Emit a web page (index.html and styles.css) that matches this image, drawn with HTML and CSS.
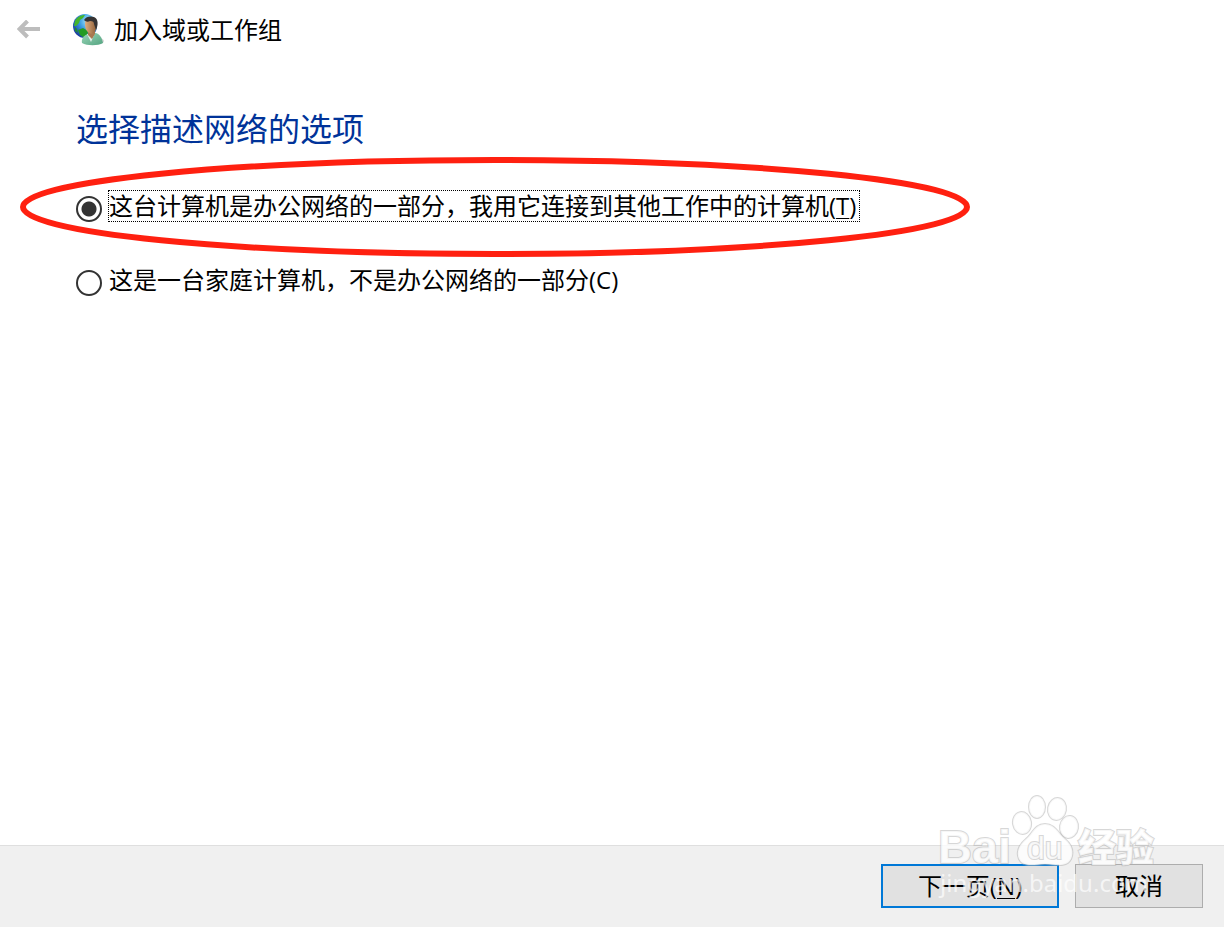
FILE: index.html
```
<!DOCTYPE html>
<html lang="zh-CN">
<head>
    <meta charset="UTF-8">
    <title>加入域或工作组</title>
    <link rel="stylesheet" href="styles.css">
</head>
<body>
    <!-- Title bar -->
    <header class="titlebar">
        <button class="back" type="button" aria-label="返回" disabled>
            <svg width="24" height="20" viewBox="0 0 24 20" fill="none" stroke="#bdbdbd" stroke-width="4">
                <path d="M3 9H23M10.500 1L2.500 9L10.500 17"/>
            </svg>
        </button>
        <svg class="app-icon" width="34" height="34" viewBox="0 0 34 34">
            <defs>
                <radialGradient id="globe" cx="0.65" cy="0.3" r="0.8">
                    <stop offset="0" stop-color="#b5efff"/>
                    <stop offset="0.45" stop-color="#3c9fe4"/>
                    <stop offset="1" stop-color="#152c93"/>
                </radialGradient>
                <linearGradient id="skin" x1="0" x2="1">
                    <stop offset="0" stop-color="#dfae80"/>
                    <stop offset="1" stop-color="#8f5f38"/>
                </linearGradient>
                <linearGradient id="shirt" x1="0" x2="1" y1="0" y2="1">
                    <stop offset="0" stop-color="#9bd6b8"/>
                    <stop offset="1" stop-color="#54a481"/>
                </linearGradient>
            </defs>
            <ellipse cx="26" cy="28" rx="5" ry="3" fill="#d5d5d5"/>
            <circle cx="12" cy="13" r="12" fill="url(#globe)"/>
            <path d="M2 8C4 4 8 2 12 2L10 5L7 7L6 10L3 13L1 13Z" fill="#45b52c"/>
            <path d="M5 17L10 15L15 18L14 24L10 24L7 22Z" fill="#249b22"/>
            <path d="M2 14L4 16L5 20L2 18Z" fill="#1f8a35"/>
            <path d="M9 30C8 26 11 22 15 21L23 20C28 22 29 26 30 30C25 33 14 33 9 30Z" fill="url(#shirt)"/>
            <path d="M14 21L18 29L22 20Z" fill="#e3eeea"/>
            <path d="M15 18H22V21L19 26L15 22Z" fill="#a87850"/>
            <path d="M12 11C12 6 16 4 19 5C24 6 24 12 23 16C22 20 19 22 16 20C13 18 12 15 12 11Z" fill="url(#skin)"/>
            <path d="M11 7C13 3 18 3 21 4C26 6 25 13 23 17L21 11C21 9 20 8 17 8C15 9 13 9 11 7Z" fill="#353333"/>
        </svg>
        <span class="title">加入域或工作组</span>
    </header>

    <!-- Page content -->
    <main class="content">
        <h1>选择描述网络的选项</h1>
        <form class="options" id="network">
            <div class="option">
                <input type="radio" name="network" id="office" checked>
                <label class="focused" for="office">这台计算机是办公网络的一部分，我用它连接到其他工作中的计算机(<u>T</u>)</label>
                <svg class="circle" viewBox="0 0 950 100" fill="none" stroke="#ff2010" stroke-width="6">
                    <ellipse cx="475" cy="50" rx="472" ry="47"/>
                </svg>
            </div>
            <div class="option">
                <input type="radio" name="network" id="home">
                <label for="home">这是一台家庭计算机，不是办公网络的一部分(C)</label>
            </div>
        </form>
    </main>

    <!-- Buttons -->
    <footer class="footer">
        <button class="btn next" type="submit" form="network">下一页(<u>N</u>)</button>
        <button class="btn" type="button">取消</button>
        <svg class="watermark" viewBox="0 0 240 120">
            <g class="mark">
                <ellipse cx="107" cy="22" rx="8" ry="11"/>
                <ellipse cx="127" cy="24" rx="9" ry="11" transform="rotate(10 127 24)"/>
                <ellipse cx="92" cy="38" rx="9" ry="11" transform="rotate(-10 92 38)"/>
                <ellipse cx="139" cy="42" rx="9" ry="11" transform="rotate(8 139 42)"/>
                <path d="M115 39C125 39 128 48 135 54C142 60 144 67 141 74C137 82 128 80 115 79C102 80 93 82 89 74C86 67 89 60 96 54C103 48 105 39 115 39Z"/>
                <text class="brand" x="8" y="78">Bai</text>
                <text class="du" x="97" y="74">du</text>
                <text class="cn" x="148" y="76">经验</text>
            </g>
            <text class="site" x="10" y="107">jingyan.baidu.com</text>
        </svg>
    </footer>
</body>
</html>
```

FILE: styles.css
```
* {
    box-sizing: border-box;
}

body {
    display: flex;
    flex-direction: column;
    min-height: 100vh;
    margin: 0;
    background-color: #fff;
    color: #000;
    font-family: "Open Sans", "Noto Sans CJK SC", sans-serif;
    font-size: 24px;
    line-height: 32px;
}

/* Title bar */
.titlebar {
    display: flex;
    align-items: center;
    height: 60px;
    padding: 0 17px;
}

.back {
    display: flex;
    margin-right: 32px;
    padding: 0;
    border: none;
    background: none;
}

.app-icon {
    margin-right: 7px;
}

/* Page content */
.content {
    flex: 1;
    padding: 44px 76px;
}

h1 {
    margin: 0 0 36px;
    color: #003399;
    font-size: 32px;
    font-weight: normal;
    line-height: 50px;
}

.options {
    display: flex;
    flex-direction: column;
    gap: 42px;
}

.option {
    position: relative;
    display: flex;
    align-items: center;
    gap: 6px;
}

.option input {
    appearance: none;
    flex: none;
    width: 26px;
    height: 26px;
    margin: 6px 0 0;
    border: 2px solid #333;
    border-radius: 50%;
    background-color: #fff;
}

.option input:checked {
    background-image: radial-gradient(circle, #333 7px, transparent 8px);
}

.option label {
    padding: 0 4px 0 1px;
}

.focused {
    outline: 1px dotted #000;
    outline-offset: -1px;
}

u {
    text-decoration-thickness: 1px;
    text-underline-offset: 3px;
}

/* Red ring around the chosen option */
.circle {
    position: absolute;
    top: -33px;
    left: -56px;
    width: 950px;
    pointer-events: none;
}

/* Buttons */
.footer {
    position: relative;
    display: flex;
    justify-content: flex-end;
    gap: 16px;
    padding: 18px 21px 19px;
    border-top: 1px solid #dfdfdf;
    background-color: #f0f0f0;
}

.btn {
    min-width: 128px;
    height: 44px;
    padding: 0;
    border: 1px solid #adadad;
    background-color: #e1e1e1;
    color: #000;
    font: inherit;
}

.next {
    min-width: 178px;
    border: 2px solid #0078d7;
}

/* Watermark */
.watermark {
    position: absolute;
    right: 54px;
    bottom: 22px;
    width: 240px;
    pointer-events: none;
}

.mark {
    fill: #fff;
    fill-opacity: 0.8;
    stroke: #b0b0b0;
    stroke-opacity: 0.5;
    stroke-width: 2px;
    paint-order: stroke;
}

.brand {
    font: bold 47px "Liberation Sans", sans-serif;
}

.du {
    font: 32px "Liberation Sans", sans-serif;
}

.cn {
    font: 900 38px "Noto Sans CJK SC", sans-serif;
}

.site {
    fill: #fff;
    fill-opacity: 0.7;
    font: 24px "Noto Sans", sans-serif;
}
```
